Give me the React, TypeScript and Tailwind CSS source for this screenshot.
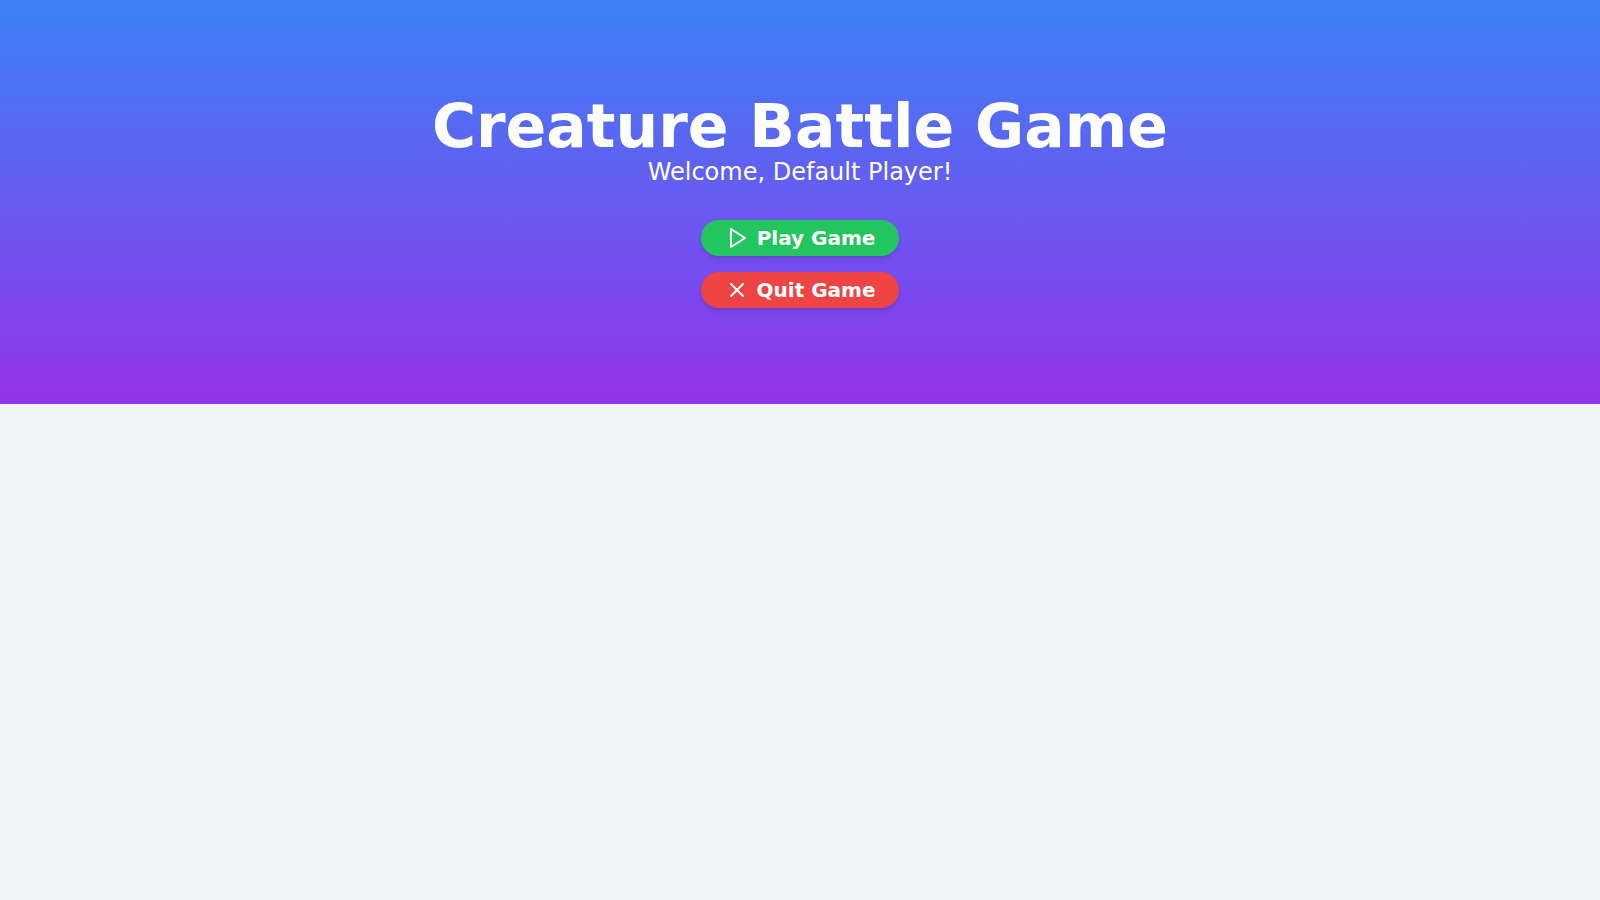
export default function App() {
  return (
    <div className="min-h-screen bg-[#f3f4f6] font-['DejaVu_Sans',sans-serif]">
      <header className="bg-[linear-gradient(to_bottom,#3b82f6,#9333ea)] py-24 text-center text-white">
        <h1 className="text-6xl leading-none font-bold">Creature Battle Game</h1>
        <p className="text-2xl">Welcome, Default Player!</p>

        <div className="mt-8 flex flex-col items-center gap-4">
          <button className="flex h-9 w-[198px] items-center justify-center gap-2 rounded-full bg-[#22c55e] text-xl font-bold text-white shadow-md">
            <svg
              width="24"
              height="24"
              viewBox="0 0 24 24"
              fill="none"
              stroke="currentColor"
              strokeWidth="2"
              strokeLinecap="round"
              strokeLinejoin="round"
            >
              <polygon points="6 3 20 12 6 21 6 3" />
            </svg>
            Play Game
          </button>
          <button className="flex h-9 w-[198px] items-center justify-center gap-2 rounded-full bg-[#ef4444] text-xl font-bold text-white shadow-md">
            <svg
              width="24"
              height="24"
              viewBox="0 0 24 24"
              fill="none"
              stroke="currentColor"
              strokeWidth="2"
              strokeLinecap="round"
              strokeLinejoin="round"
            >
              <path d="M18 6 6 18" />
              <path d="m6 6 12 12" />
            </svg>
            Quit Game
          </button>
        </div>
      </header>
    </div>
  );
}
